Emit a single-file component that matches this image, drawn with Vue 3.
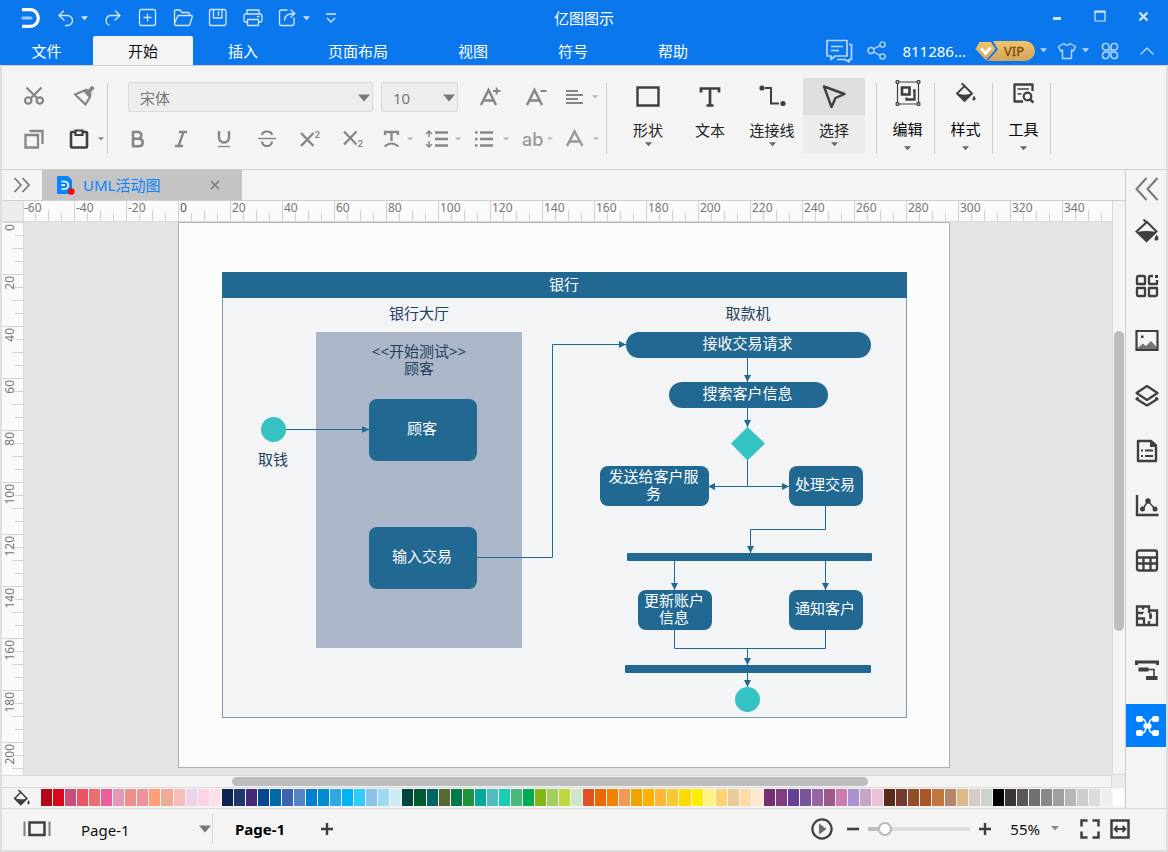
<script setup>
import { computed, h, onBeforeUnmount, onMounted, ref } from 'vue'

const S = (w, d, extra = '') => `<path d="${d}" fill="none" stroke="currentColor" stroke-width="${w}" ${extra}/>`
const F = (d, extra = '') => `<path d="${d}" fill="currentColor" ${extra}/>`
const T = (t, x, y, size, weight = 600) =>
  `<text x="${x}" y="${y}" font-size="${size}" font-weight="${weight}" font-family="Inter, sans-serif" fill="currentColor">${t}</text>`
const round = 'stroke-linecap="round" stroke-linejoin="round"'

const icons = {
  caret: [8, 5, F('M0 0H8L4 4.5Z')],
  caretBig: [12, 8, F('M0 0.5H12L6 7.5Z')],
  logo: [20, 22, S(3.2, 'M1 2.6H9.5A7.8 8.4 0 0 1 9.5 19.4H1') + '<path d="M2 11H10" stroke="#9cc8ff" stroke-width="3.2" stroke-linecap="round"/>'],
  undo: [20, 20, S(1.3, 'M7.5 3 3 7.5 8 12M3.5 7.5H11.5A5 5 0 0 1 11.5 17.5H9.5', round)],
  redo: [20, 20, S(1.3, 'M12.5 3 17 7.5 12 12M16.500 7.500H8.500A5 5 0 0 0 6 17', round)],
  newDoc: [20, 20, S(1.3, 'M3.5 1.5H15.5Q17.5 1.5 17.5 3.5V15.5Q17.5 17.5 15.5 17.5H3.5Q1.5 17.5 1.5 15.5V3.5Q1.5 1.5 3.5 1.5ZM6 9.5H13M9.5 6V13', round)],
  folder: [20, 20, S(1.3, 'M1.5 15V3Q1.5 2 2.5 2H7L9 4.5H15.5Q16.5 4.5 16.5 5.5V7.5M1.5 15.5 4.5 8.5Q4.8 7.5 6 7.5H18.5Q19.500 7.5 19.3 8.5L17 16Q16.7 17.5 15.5 17.5H3Q1.5 17.5 1.5 15.5', round)],
  save: [20, 20, S(1.3, 'M3 1.5H16Q18 1.5 18 3.5V15.5Q18 17.5 16 17.5H3Q1.5 17.5 1.5 15.5V3.5Q1.5 1.5 3 1.5ZM5.5 1.5V10H14V1.5M10.5 4V7.5', round)],
  print: [20, 20, S(1.3, 'M4 6V2H16V6M4 14H2.5Q1 14 1 12.5V8Q1 6 3 6H17Q19 6 19 8V12.5Q19 14 17.5 14H16M4.5 11.5H15.5V17.5H4.5ZM14.5 8.5H16', round)],
  export: [20, 20, S(1.3, 'M9 2H3.5Q1.5 2 1.5 4V15.5Q1.5 17.5 3.5 17.5H14Q16 17.5 16 15.5V10M6.5 12Q7 5.5 16 5.5M13 2 16.8 5.5 13 9', round)],
  more: [12, 12, S(1.4, 'M1 2H11M2 6 6 10 10 6')],
  min: [10, 10, F('M1 6H9V9H1Z')],
  max: [12, 12, S(1.2, 'M1 1.5H11V11H1Z') + F('M0.4 0.5H11.600V2.700H0.4Z')],
  close: [11, 11, S(2.2, 'M1.500 1.500 9.500 9.500M9.500 1.500 1.500 9.500')],
  chat: [28, 24, S(1.7, 'M2 1.5H22V17H10L6 20.500V17H2ZM6 7.500H18M6 11.500H14M24 5.500H26.500V20.500H24V23L20 20.500H12', 'stroke-linejoin="round"')],
  share: [20, 20, `<g fill="none" stroke="currentColor" stroke-width="1.4"><circle cx="4" cy="9.5" r="3"/><circle cx="15.5" cy="3.500" r="2.600"/><circle cx="15.5" cy="15.500" r="2.600"/><path d="M6.500 8 13 4.700M6.500 11 13 14.300"/></g>`],
  shirt: [20, 18, S(1.4, 'M7 1.500 1.500 4.500 3.500 9 5.500 8V16.500H14.500V8L16.500 9 18.500 4.500 13 1.500Q10 5 7 1.500Z', round)],
  clover: [18, 18, S(1.4, 'M8 8H4.500A3.300 3.300 0 1 1 8 4.500ZM10 8V4.500A3.300 3.300 0 1 1 13.500 8ZM8 10V13.500A3.300 3.300 0 1 1 4.500 10ZM10 10H13.500A3.300 3.300 0 1 1 10 13.500Z')],
  up: [16, 10, S(1.4, 'M1.500 8.500 8 2 14.500 8.500')],
  cut: [22, 22, `<g fill="none" stroke="currentColor" stroke-width="2.300"><circle cx="5.200" cy="14.500" r="3.200"/><circle cx="16.800" cy="14.500" r="3.200"/><path d="M3.500 1.500 14.500 12.500M18.500 1.500 7.500 12.500"/></g>`],
  brush: [24, 22, S(2.200, 'M3 8.500 12.500 4.500 18 11 13.500 18.500Z', 'stroke-linejoin="round"') + F('M10.500 4.500 14.500 2.500 16.500 3.500 19 0.300Q22 -0.500 22.500 2.500L19 6 19.500 9 18 12.500Z')],
  copy: [20, 20, S(2.300, 'M1.500 6H14V18.500H1.500ZM5.500 2H18.500V15')],
  paste: [22, 22, S(2.600, 'M7 4H4Q3 4 3 5V18.500Q3 19.500 4 19.500H18Q19 19.500 19 18.500V5Q19 4 18 4H15') + S(2.200, 'M7.500 2.500H14.500V7H7.500Z')],
  bold: [20, 20, S(2.600, 'M5 2.500V17.500M4 3H10.500A3.400 3.400 0 0 1 10.500 9.700H5M10.500 9.700H11.500A3.800 3.800 0 0 1 11.500 17.200H4')],
  italic: [20, 20, S(2.300, 'M8 3H16M4 17H12M12.500 3 7.500 17')],
  underline: [20, 20, S(2.500, 'M5 2V8.500A5 5 0 0 0 15 8.500V2') + S(1.300, 'M4 17.500H16')],
  strike: [20, 20, S(2.200, 'M15 6Q14.500 2.500 10 2.500T5 6M5 12.500Q5.500 17 10 17T15 12.500') + S(1.400, 'M1 9.500H19')],
  sup: [22, 20, S(2.300, 'M2 4 14.500 17M14.500 4 2 17') + T('2', 15.5, 9, 9, 600)],
  sub: [22, 20, S(2.300, 'M2 2.500 14.500 15.500M14.500 2.500 2 15.500') + T('2', 15.5, 18, 9, 600)],
  fontT: [20, 20, S(2.300, 'M3 6V3H16V6M9.500 3V12') + S(1.900, 'M2.500 17.500Q9.500 11.500 16.500 17.500')],
  spacing: [26, 20, S(2.300, 'M10 3.500H23M10 10H23M10 16.500H23') + S(1.500, 'M4 3V8M4 12V17M1 5 4 2 7 5M1 15 4 18 7 15')],
  list: [22, 20, S(2.300, 'M7 3.500H20M7 10H20M7 16.500H20M2 3.500H4.500M2 10H4.500M2 16.500H4.500')],
  ab: [24, 20, T('ab', 1, 17, 18, 500)],
  fontA: [20, 20, S(2.500, 'M2 17 9.500 2.500 17.500 17M4.500 12.500H14.500')],
  grow: [24, 22, S(2.500, 'M3 19 10.500 4 18 19M5.500 14.500H15.500') + S(2, 'M15 5H22.500M18.700 1.500V8.500')],
  shrink: [24, 22, S(2.500, 'M3 19 10.500 4 18 19M5.500 14.500H15.500') + S(2, 'M16.500 5H22.500')],
  align: [22, 20, S(2.200, 'M2 4H14M2 8H19M2 12H14M2 16H19')],
  rect: [24, 22, S(2.400, 'M1.500 1.500H22.500V19.500H1.500Z')],
  text: [24, 22, S(2.700, 'M3 6.500V2.500H21V6.500M12 2.500V19.500M8.500 19.500H15.500')],
  connector: [28, 24, `<circle cx="4" cy="3" r="2.600" fill="currentColor"/><circle cx="25" cy="18.500" r="2.600" fill="currentColor"/>` + S(2, 'M7 3H13V18.500H21')],
  pointer: [24, 24, S(2.400, 'M2 1.500 22.500 9 13.500 13 9.500 22Z', 'stroke-linejoin="round"')],
  edit: [26, 26, S(1.200, 'M2.500 2H23.500V24H2.500Z') + S(2.600, 'M7 7.500H14.500V14.500H7Z') + S(2.300, 'M18 10.500H19.500V19.500H11.500V17.500') + `<g fill="#f4f4f4" stroke="currentColor" stroke-width="1.300"><circle cx="2.500" cy="2" r="1.500"/><circle cx="23.500" cy="2" r="1.500"/><circle cx="2.500" cy="24" r="1.500"/><circle cx="23.500" cy="24" r="1.500"/></g>`],
  bucket: [22, 22, S(1.900, 'M6.500 1.500 10 4M9.500 4 17 11.500 9.500 19 2 11.500Z') + F('M2 11Q8 14 17 11.500L9.500 19.500Z') + F('M19 13.500Q22 18 19 18.500T19 13.500Z')],
  bucketBig: [24, 26, S(2, 'M8.500 1.500 12 5M12 4 21.500 13.500 11.500 23 1.500 13.500Z') + F('M2 14Q11 12 21.500 14L11.500 24Z') + F('M21.500 16.500Q25.500 22 21.500 22.500T21.500 16.500Z')],
  tools: [24, 22, S(2.300, 'M11 19.500H2.500V2.500H20.500V9', 'stroke-linejoin="round"') + S(1.900, 'M5.500 7H17M5.500 12H9.500', 'opacity=".75"') + `<circle cx="15.500" cy="14.500" r="3.800" fill="none" stroke="currentColor" stroke-width="2.200"/>` + S(2.400, 'M18 17.500 21.500 20.500')],
  expand: [18, 16, S(1.700, 'M1.500 1 8 8 1.500 15M9.500 1 16 8 9.500 15')],
  collapse: [24, 24, S(2, 'M11.500 1 1.500 12 11.500 23M22.500 1 12.500 12 22.500 23')],
  doc: [18, 19, '<path d="M1 1H10.500L14 4.500V17H1Z" fill="#0a84ff" stroke="#0a84ff" stroke-width="2" stroke-linejoin="round"/><path d="M4.500 5.500H7.500A3.500 3.500 0 0 1 7.500 13H4.500M4.500 9.200H8" fill="none" stroke="#fff" stroke-width="1.700"/><circle cx="14.300" cy="15.500" r="3.200" fill="#f00"/>'],
  tabClose: [10, 10, S(1.500, 'M1 1 9 9M9 1 1 9')],
  grid: [24, 24, S(2.300, 'M2 4Q2 2 3.500 2H8.500Q10 2 10 4V10H2ZM14 10V3.500Q14 2 15.500 2H18M22 6V10H13.500M2 14H10V22H3.500Q2 22 2 20.500ZM14 14H22V20.500Q22 22 20.500 22H14Z', 'stroke-linejoin="round"') + F('M20 1H23V4H20Z')],
  image: [24, 24, S(2.200, 'M1.500 2H22.500V21H1.500Z') + F('M2 19.500 8 14.500 11 17 16 12 22 18.500V21H2Z', 'opacity=".7"') + F('M6 6.500H8.500V9H6Z')],
  layers: [26, 24, S(2.200, 'M13 2 23.500 9 13 16 2.500 9ZM4.500 13.500 2.500 15 13 21.500 23.500 15 21.500 13.500', 'stroke-linejoin="round"')],
  notes: [24, 24, S(2.400, 'M3 2H16L21 6.500V22H3Z', 'stroke-linejoin="round"') + F('M15 2H17L21.500 6.500V8H15Z') + S(2.200, 'M6 11.500H8M10 11.500H18M6 17H8M10 17H18')],
  chart: [24, 24, S(2.400, 'M2 1V21H23.500') + S(1.500, 'M7.500 15.500 13 7 20 15') + `<g fill="currentColor"><circle cx="7.500" cy="15" r="2.500"/><circle cx="13" cy="7" r="2.700"/><circle cx="20" cy="15" r="2.500"/></g>`],
  table: [24, 24, S(2.300, 'M4 1.500H20Q22 1.500 22 3.500V19.500Q22 21.500 20 21.500H4Q2 21.500 2 19.500V3.500Q2 1.500 4 1.500ZM2 8.500H22M2 14.500H22M8.500 8.500V21.500M15.500 8.500V21.500')],
  plan: [24, 24, S(2.300, 'M2 2.500H14V6.500H22V21H2ZM2 9H8M8 2.500V5.500M2 14.500H9V21M8 9V8M14 6.500V9M14 21V17M14 12H17M15.500 9V15')],
  layout: [24, 24, S(3, 'M1.500 6V3H22.500V6') + F('M3.500 8.500H13.500V12.500H3.500ZM11 17H22.500V21H11Z') + S(1.600, 'M13 10.500H19V18')],
  mind: [26, 22, `<g fill="currentColor"><rect x="2" y="1" width="7" height="6" rx="2"/><rect x="18" y="1" width="7" height="6" rx="2"/><rect x="2" y="15" width="7" height="6" rx="2"/><rect x="18" y="15" width="7" height="6" rx="2"/><rect x="9.500" y="8.500" width="8" height="5" rx="1.500"/></g>` + S(1.600, 'M8 4Q12 4 12 11T8 18M19 4Q15 4 15 11T19 18')],
  pages: [28, 18, S(2.500, 'M6.500 2.500H21.500V15H6.500Z') + S(2, 'M1.500 1.500V16M26.500 1.500V16', 'opacity=".65"')],
  plus: [14, 14, S(2.400, 'M7 1V13M1 7H13')],
  minus: [14, 14, S(2.600, 'M1 7H13')],
  play: [22, 22, '<circle cx="11" cy="11" r="9.600" fill="none" stroke="currentColor" stroke-width="2.200"/>' + F('M8 5.500 15.500 11 8 16.500Z', 'opacity=".75"')],
  full: [20, 20, S(2.500, 'M1.500 7.500V1.500H7.500M12.500 1.500H18.500V7.500M18.500 12.500V18.500H12.500M7.500 18.500H1.500V12.500')],
  fit: [20, 20, S(2.500, 'M1.500 1.500H18.500V18.500H1.500Z') + S(1.800, 'M5 10H15M7.500 7 4.500 10 7.500 13M12.500 7 15.500 10 12.500 13')],
  vip: [60, 20, '<defs><linearGradient id="gold" x1="0" y1="0" x2="0" y2="1"><stop offset="0" stop-color="#f2c36c"/><stop offset="1" stop-color="#d3a35c"/></linearGradient></defs><path d="M18 0H50A10 10 0 0 1 50 20H12.500L23 8.500Z" fill="url(#gold)"/><path d="M4.500 1H16L20.500 8 11 19.500 0.500 8Z" fill="url(#gold)"/><path d="M6 7 10.500 12.500 15.500 6.500" fill="none" stroke="#fff" stroke-width="2.800"/><text x="29" y="15" font-size="13" font-family="Noto Sans, sans-serif" fill="#7b4d05" stroke="#7b4d05" stroke-width=".3">VIP</text>'],
}

const Icon = (props) => {
  const [w, hgt, body] = icons[props.name]
  return h('svg', { width: w, height: hgt, viewBox: `0 0 ${w} ${hgt}`, 'aria-hidden': 'true', innerHTML: body })
}
Icon.props = ['name']

const menus = ['文件', '开始', '插入', '页面布局', '视图', '符号', '帮助']
const quick = [
  { n: 'undo', l: '撤销', d: true }, { n: 'redo', l: '重做' }, { n: 'newDoc', l: '新建' }, { n: 'folder', l: '打开' },
  { n: 'save', l: '保存' }, { n: 'print', l: '打印' }, { n: 'export', l: '导出', d: true }, { n: 'more', l: '更多' },
]
const styles = [['bold', '加粗'], ['italic', '斜体'], ['underline', '下划线'], ['strike', '删除线'], ['sup', '上标'], ['sub', '下标']]
const drops = [['fontT', '文字方向'], ['spacing', '行距'], ['list', '列表'], ['ab', '大小写'], ['fontA', '字体颜色']]
const big = [
  { n: 'rect', t: '形状', d: true }, { n: 'text', t: '文本' },
  { n: 'connector', t: '连接线', d: true }, { n: 'pointer', t: '选择', d: true, on: true },
]
const groups = [['edit', '编辑'], ['bucket', '样式'], ['tools', '工具']]
const side = [
  ['bucketBig', '填充'], ['grid', '符号库'], ['image', '图片'], ['layers', '图层'], ['notes', '备注'],
  ['chart', '图表'], ['table', '表格'], ['plan', '平面图'], ['layout', '排列'], ['mind', '思维导图'],
]
const palette = ('b20818 d9081c c84f78 eb5560 ec6e72 e6609d e398b8 ef8f8a f0929c ff9f7a f0aa93 f6bdbc ead5e8 ffd3e6 ffdfe6 ' +
  '0f2350 20376e 432b78 054a91 0069a8 3f62ad 5584c4 0080cf 008dcd 2daae4 00b4f2 31caf9 8bc1eb 9fd9f0 cdeaf6 ' +
  '00433a 005a30 006563 576b30 007a48 1f943d 00ab9c 50bdc3 1accb2 48b97d 00ac52 80b915 a3cf62 bfd83f cde6c7 ' +
  'e35022 ec6800 f28300 f19a54 f1a400 ffb000 ffb735 f8c833 ffda00 ffee00 fdf283 fdd271 eacc98 ffdba8 fde8d0 ' +
  '74306f 803d81 664095 78549a 9766a0 9d5989 cd7baf ab91cf c8a4c8 ebc1da ' +
  '5a291a 743b30 904e29 a95525 c0763f b5866a dfb887 d5ccc6 cbd4cb ' +
  '000000 3c3535 585858 707070 888888 9ea09f b5b6b5 cccdcd dcdcdc efefef ffffff').split(' ')

const zoom = ref(11)

const step = 13
const tickLen = [20, 8, 11, 8]
const win = ref([window.innerWidth, window.innerHeight])
const measure = () => { win.value = [window.innerWidth, window.innerHeight] }
onMounted(() => window.addEventListener('resize', measure))
onBeforeUnmount(() => window.removeEventListener('resize', measure))
const count = (room) => Math.max(0, Math.floor(room / step))
const hTicks = computed(() => Array.from({ length: count(win.value[0] - 80) + 1 }, (_, i) => ({ x: i * step - 2, k: i % 4, v: i / 4 * 20 - 60 })))
const vTicks = computed(() => Array.from({ length: count(Math.max(win.value[1], 852) - 300) + 1 }, (_, i) => ({ y: i * step, k: i % 4, v: i / 4 * 20 })))

const boxes = [
  { x: 369, y: 399, w: 108, h: 62, r: 8, t: ['顾客'] },
  { x: 369, y: 527, w: 108, h: 62, r: 8, t: ['输入交易'] },
  { x: 626, y: 332, w: 245, h: 26, r: 13, t: ['接收交易请求'] },
  { x: 669, y: 382, w: 159, h: 26, r: 13, t: ['搜索客户信息'] },
  { x: 600, y: 466, w: 109, h: 40, r: 8, t: ['发送给客户服', '务'] },
  { x: 789, y: 466, w: 74, h: 40, r: 8, t: ['处理交易'] },
  { x: 638, y: 590, w: 74, h: 40, r: 8, t: ['更新账户', '信息'] },
  { x: 789, y: 590, w: 74, h: 40, r: 8, t: ['通知客户'] },
  { x: 627, y: 553, w: 245, h: 8, r: 1, t: [] },
  { x: 625, y: 665, w: 246, h: 8, r: 1, t: [] },
]
const labels = [
  { x: 419, y: 319, t: ['银行大厅'] }, { x: 748, y: 319, t: ['取款机'] },
  { x: 419, y: 357, t: ['<<开始测试>>', '顾客'] }, { x: 273, y: 465, t: ['取钱'] },
]
const lines = [
  'M286 429.5H369', 'M477 557.5H552.5V344.5H626', 'M747.5 358V382', 'M747.5 408V427', 'M747.5 486.5H789', 'M747.5 486.5H708',
  'M825.5 506V529.5H750.5V553', 'M674.5 561V590', 'M825.5 561V590', 'M747.5 648.5V665', 'M747.5 673V687',
]
</script>

<template>
  <div class="app">
    <header class="top">
      <div class="titlebar">
        <div class="quick">
          <Icon name="logo" class="logo" />
          <button v-for="q in quick" :key="q.n" type="button" :aria-label="q.l">
            <Icon :name="q.n" /><Icon v-if="q.d" name="caret" class="qcaret" />
          </button>
        </div>
        <h1>亿图图示</h1>
        <div class="winctl">
          <button type="button" aria-label="最小化"><Icon name="min" /></button>
          <button type="button" aria-label="最大化"><Icon name="max" /></button>
          <button type="button" aria-label="关闭"><Icon name="close" /></button>
        </div>
      </div>
      <div class="menubar">
        <nav>
          <button v-for="m in menus" :key="m" type="button" class="menu" :class="{ on: m === '开始' }">{{ m }}</button>
        </nav>
        <div class="account">
          <button type="button" aria-label="消息"><Icon name="chat" /></button>
          <button type="button" aria-label="分享"><Icon name="share" /></button>
          <span class="user">811286...</span>
          <button type="button" class="withcaret" aria-label="VIP"><Icon name="vip" /><Icon name="caret" class="small" /></button>
          <button type="button" class="withcaret" aria-label="主题"><Icon name="shirt" /><Icon name="caret" class="small" /></button>
          <button type="button" class="apps" aria-label="应用"><Icon name="clover" /></button>
          <button type="button" class="fold" aria-label="收起"><Icon name="up" /></button>
        </div>
      </div>
    </header>

    <section class="ribbon">
      <div class="clip">
        <button type="button" aria-label="剪切"><Icon name="cut" /></button>
        <button type="button" class="brush" aria-label="格式刷"><Icon name="brush" /></button>
        <button type="button" aria-label="复制"><Icon name="copy" /></button>
        <button type="button" class="drop dark" aria-label="粘贴"><Icon name="paste" /><Icon name="caret" class="tiny" /></button>
      </div>
      <i class="rule"></i>
      <div class="format">
        <div class="frow">
          <label class="sel font"><select aria-label="字体"><option>宋体</option></select><Icon name="caretBig" /></label>
          <label class="sel size"><select aria-label="字号"><option>10</option></select><Icon name="caretBig" /></label>
          <div class="scale">
            <button type="button" aria-label="增大字号"><Icon name="grow" /></button>
            <button type="button" aria-label="减小字号"><Icon name="shrink" /></button>
          </div>
          <button type="button" class="drop end" aria-label="对齐"><Icon name="align" /><Icon name="caret" class="tiny" /></button>
        </div>
        <div class="frow">
          <div class="basic">
            <button v-for="s in styles" :key="s[0]" type="button" :aria-label="s[1]"><Icon :name="s[0]" /></button>
          </div>
          <div class="drops">
            <button v-for="s in drops" :key="s[0]" type="button" class="drop" :aria-label="s[1]"><Icon :name="s[0]" /><Icon name="caret" class="tiny" /></button>
          </div>
        </div>
      </div>
      <i class="rule"></i>
      <div class="bigs">
        <button v-for="b in big" :key="b.n" type="button" class="big" :class="{ on: b.on }">
          <span class="pic"><Icon :name="b.n" /></span><span class="cap">{{ b.t }}</span><Icon v-if="b.d" name="caret" class="small" />
        </button>
      </div>
      <i class="rule"></i>
      <template v-for="g in groups" :key="g[0]">
        <button type="button" class="big grp">
          <span class="pic"><Icon :name="g[0]" /></span><span class="cap">{{ g[1] }}</span><Icon name="caret" class="small" />
        </button>
        <i class="rule"></i>
      </template>
    </section>

    <div class="main">
      <div class="left">
        <div class="tabs">
          <button type="button" class="expand" aria-label="展开"><Icon name="expand" /></button>
          <div class="tab">
            <Icon name="doc" /><span>UML活动图</span>
            <button type="button" aria-label="关闭标签"><Icon name="tabClose" /></button>
          </div>
        </div>
        <div class="work">
          <div class="corner"></div>
          <svg class="hruler" aria-hidden="true">
            <g v-for="t in hTicks" :key="t.x">
              <rect v-if="t.x > 0" :x="t.x" :y="20 - tickLen[t.k]" width="1" :height="tickLen[t.k]" />
              <text v-if="t.k === 0" :x="t.x + 2" y="11" :class="{ zero: t.v === 0 }">{{ t.v }}</text>
            </g>
          </svg>
          <div class="vtrack"><div class="vthumb"></div></div>
          <svg class="vruler" aria-hidden="true">
            <g v-for="t in vTicks" :key="t.y">
              <rect :x="21 - tickLen[t.k]" :y="t.y" :width="tickLen[t.k]" height="1" />
              <text v-if="t.k === 0" :transform="`translate(12 ${t.y + 2}) rotate(-90)`" text-anchor="end">{{ t.v }}</text>
            </g>
          </svg>
          <div class="canvas">
            <svg class="paper" width="770" height="544" viewBox="179 223 770 544" role="img" aria-label="UML活动图">
              <defs>
                <marker id="arrow" viewBox="0 0 6 6" refX="6" refY="3" markerWidth="7" markerHeight="7" orient="auto">
                  <path d="M0 0L6 3L0 6Z" fill="#216892" />
                </marker>
              </defs>
              <rect x="222.5" y="272.5" width="684" height="445" fill="#f3f4f6" stroke="#7d9ab1" />
              <rect x="222" y="272" width="685" height="26" fill="#216892" />
              <rect x="316" y="332" width="206" height="316" fill="#abb7c8" />
              <text class="light" x="564" y="290">银行</text>
              <g class="line">
                <path v-for="l in lines" :key="l" :d="l" marker-end="url(#arrow)" />
                <path d="M747.5 460V486.5M674.5 630V648.5H825.5V630" />
              </g>
              <circle cx="273.5" cy="429.5" r="12.5" fill="#35c2c3" />
              <circle cx="747.5" cy="699.5" r="12.5" fill="#35c2c3" />
              <path d="M747.5 427 765 443.5 747.5 460.5 731 443.5Z" fill="#35c2c3" />
              <g v-for="(b, i) in boxes" :key="i">
                <rect :x="b.x" :y="b.y" :width="b.w" :height="b.h" :rx="b.r" fill="#216892" />
                <text v-if="b.t.length" class="light" :y="b.y + b.h / 2 + 4 - (b.t.length - 1) * 8">
                  <tspan v-for="(t, j) in b.t" :key="t" :x="b.x + b.w / 2 - 1" :dy="j ? 17 : 0">{{ t }}</tspan>
                </text>
              </g>
              <text v-for="(l, i) in labels" :key="i" class="darkt" :y="l.y">
                <tspan v-for="(t, j) in l.t" :key="t" :x="l.x" :dy="j ? 17 : 0">{{ t }}</tspan>
              </text>
            </svg>
          </div>
          <div class="htrack"><div class="hthumb"></div></div>
          <div class="nook"></div>
        </div>
        <div class="palette">
          <button type="button" class="fillbtn" aria-label="填充颜色"><Icon name="bucket" /></button>
          <div class="swatches">
            <button v-for="c in palette" :key="c" type="button" :aria-label="'#' + c" :style="{ background: '#' + c }"></button>
          </div>
        </div>
      </div>
      <aside class="side">
        <button type="button" class="collapse" aria-label="收起面板"><Icon name="collapse" /></button>
        <div class="tools">
          <button v-for="s in side" :key="s[0]" type="button" :class="{ on: s[0] === 'mind' }" :aria-label="s[1]"><Icon :name="s[0]" /></button>
        </div>
      </aside>
    </div>

    <footer class="status">
      <button type="button" class="pagesbtn" aria-label="页面"><Icon name="pages" /></button>
      <label class="pagesel"><select aria-label="页面列表"><option>Page-1</option></select><Icon name="caretBig" /></label>
      <button type="button" class="pagetab">Page-1</button>
      <button type="button" aria-label="添加页面"><Icon name="plus" /></button>
      <div class="zoom">
        <button type="button" aria-label="播放"><Icon name="play" /></button>
        <div class="slide">
          <button type="button" aria-label="缩小"><Icon name="minus" /></button>
          <input v-model="zoom" type="range" min="0" max="100" aria-label="缩放">
          <button type="button" aria-label="放大"><Icon name="plus" /></button>
        </div>
        <button type="button" class="pct">55%<Icon name="caret" /></button>
        <div class="fits">
          <button type="button" aria-label="全屏"><Icon name="full" /></button>
          <button type="button" aria-label="适合宽度"><Icon name="fit" /></button>
        </div>
      </div>
    </footer>
  </div>
</template>

<style>
body { margin: 0; background: #dfdfdf; }
</style>

<style scoped>
* { box-sizing: border-box; }
.app {
  display: flex; flex-direction: column; min-height: 100vh;
  font: 15px/20px "Noto Sans", "Noto Sans CJK SC", sans-serif; color: #222;
  background: #dfdfdf; overflow: hidden;
}
svg { display: block; flex: none; }
button {
  display: flex; align-items: center; justify-content: center; padding: 0; border: 0;
  background: none; color: inherit; font: inherit; flex: none;
}
select { appearance: none; border: 0; background: none; font: inherit; color: inherit; width: 100%; height: 100%; padding: 0; }
.tiny { width: 6px; height: 4px; }
.small { width: 7px; height: 5px; }

.top { background: #0a78ec; color: #d3e6fc; }
.titlebar { display: grid; grid-template-columns: 1fr auto 1fr; align-items: center; height: 36px; }
.quick { display: flex; align-items: center; gap: 15px; padding-left: 21px; height: 36px; }
.logo { color: #fff; }
.qcaret { width: 7px; height: 5px; margin-left: 5px; }
h1 { margin: 0; font-size: 15px; font-weight: 400; color: #fff; }
.winctl { display: flex; justify-content: flex-end; gap: 32px; padding: 0 19px 4px 0; }
.menubar { display: flex; justify-content: space-between; height: 29px; }
nav { display: flex; }
.menu { padding: 0 35px; color: #fff; }
.menu:first-child { width: 93px; padding: 0; }
.menu.on { background: #f4f4f4; color: #111; border-radius: 2px 2px 0 0; }
.account { display: flex; align-items: center; padding-right: 13px; color: #b9d7fa; }
.account > button + button { margin-left: 14px; }
.user { color: #fff; margin: 0 9px 0 15px; }
.withcaret { gap: 5px; }
.account .withcaret + .withcaret { margin-left: 10px; }
.account .apps { margin-left: 12px; }
.account .fold { margin-left: 20px; }

.ribbon {
  display: flex; align-items: flex-start; height: 105px; margin: 0 2px; padding: 16px 0 0 18px;
  background: #f4f4f4; border-top: 1px solid #d3d3d3; border-bottom: 1px solid #cfcfcf; color: #868686;
}
.clip { display: grid; grid-template: 30px 30px / 28px 36px; gap: 12px 20px; }
.brush { width: 32px; }
.dark { color: #3f3f3f; }
.drop { justify-content: space-between; }
.drop .tiny { opacity: .6; }
.rule { width: 1px; height: 71px; background: #cbcbcb; margin: 1px 0 0; flex: none; }
.clip + .rule { margin-left: 3px; }
.format { display: grid; grid-template-rows: 30px 30px; gap: 12px; width: 470px; margin: 0 8px 0 20px; }
.frow { display: flex; justify-content: flex-start; }
.sel { position: relative; display: block; border: 1px solid #dadade; border-radius: 2px; background: #ededed; color: #777; }
.sel select { padding: 2px 0 0 11px; }
.sel svg { position: absolute; right: 2px; top: 11px; pointer-events: none; }
.font { width: 245px; margin-right: 8px; }
.size { width: 77px; margin-right: 20px; }
.scale { display: flex; gap: 22px; }
.end { width: 34px; margin-left: 16px; }
.basic { display: flex; gap: 23px; }
.basic button { width: 20px; }
.drops { display: flex; gap: 12px; margin-left: 19px; }
.drops button:nth-child(1) { width: 31px; }
.drops button:nth-child(2), .drops button:nth-child(3) { width: 36px; }
.drops button:nth-child(4) { width: 32px; }
.drops button:nth-child(5) { width: 34px; }
.drops button:nth-child(n + 4) { color: #999; }
.bigs { display: flex; margin: -4px 11px 0 10px; }
.big { flex-direction: column; justify-content: flex-start; width: 62px; height: 76px; color: #3f3f3f; border-radius: 2px; }
.big .pic { display: flex; align-items: center; justify-content: center; width: 100%; height: 37px; }
.big .cap { margin-top: 5px; color: #222; }
.big .small { margin-top: 2px; color: #666; }
.big.on { background: #ececec; }
.big.on .pic { background: #dedede; border-radius: 2px 2px 0 0; }
.big.grp { width: 57px; margin-top: -5px; padding-left: 4px; height: 82px; }
.big.grp .pic { height: 32px; }
.big.grp .cap { margin-top: 10px; color: #000; }
.big.grp .small { margin-top: 7px; }

.main { display: flex; flex: 1; margin: 0 2px; background: #f4f4f4; border-bottom: 1px solid #dcdcdc; }
.left { display: flex; flex-direction: column; flex: 1; min-width: 0; }
.tabs { display: flex; height: 31px; border-bottom: 1px solid #cfcfcf; }
.expand { width: 40px; color: #777; }
.tab { display: flex; align-items: center; width: 200px; padding: 0 22px 0 15px; gap: 8px; background: #c4c4c4; color: #0a84ff; }
.tab button { margin-left: auto; color: #777; }
.work { display: grid; grid-template: 21px minmax(553px, 1fr) 13px / 22px minmax(0, 1fr) 13px; flex: 1; background: #f4f4f4; }
.corner { background: #ececec; border-right: 1px solid #dadada; border-bottom: 1px solid #dadada; }
.hruler, .vruler { background: #fafafa; fill: #d2d2d2; overflow: visible; font-size: 12px; }
.hruler { width: 100%; height: 21px; border-bottom: 1px solid #dadada; }
.vruler { width: 22px; height: 100%; border-right: 1px solid #dadada; }
.hruler text, .vruler text { fill: #777; }
.hruler .zero { fill: #555; }
.vtrack { grid-row: 1 / 3; grid-column: 3; background: #f4f4f4; border-left: 1px solid #dadada; border-bottom: 1px solid #dadada; padding: 130px 1px 0; }
.vthumb { height: 300px; border-radius: 5px; background: #bdbdbd; }
.canvas { background: #e4e4e4; padding-left: 154px; overflow: hidden; }
.paper { box-sizing: content-box; border: 1px solid #b0b0b0; background: #fcfcfc; }
.htrack { grid-column: 1 / 3; border: solid #dadada; border-width: 1px 1px 1px 0; padding: 1px 243px 0 230px; }
.hthumb { height: 9px; border-radius: 5px; background: #bdbdbd; }
.nook { background: #ececec; }
.paper text { font-size: 15px; text-anchor: middle; }
.light { fill: #fff; }
.darkt { fill: #24405c; }
.line { fill: none; stroke: #216892; stroke-width: 1; }
.palette { display: flex; height: 20px; align-items: flex-start; padding-top: 1px; }
.fillbtn { width: 39px; height: 18px; color: #3f3f3f; }
.fillbtn svg { width: 18px; height: 18px; }
.swatches { display: flex; gap: 1px; flex: 1; height: 17px; padding-right: 1px; }
.swatches button { flex: 1 1 0; height: 17px; min-width: 0; }
.side { width: 41px; border-left: 1px solid #cbcbcb; color: #3f3f3f; }
.side button { width: 100%; padding-left: 2px; }
.side .collapse { height: 38px; color: #777; }
.tools { display: grid; gap: 12px; padding-top: 1px; }
.tools button { height: 43px; }
.tools .on { background: #0080ff; color: #fff; }

.status { display: flex; align-items: center; height: 41px; margin: 0 2px 2px; padding: 0 36px 2px 21px; background: #f4f4f4; color: #3f3f3f; }
.pagesel { position: relative; width: 162px; height: 30px; border-right: 1px solid #d8d8d8; color: #111; }
.pagesel select { padding: 2px 0 0 30px; }
.pagesel svg { position: absolute; right: 1px; top: 11px; color: #777; pointer-events: none; }
.pagetab { margin: 0 35px 0 22px; font-weight: 700; color: #000; }
.zoom { display: flex; align-items: center; margin-left: auto; }
.slide { display: flex; align-items: center; gap: 8px; margin: 0 18px 0 13px; }
.pct { gap: 11px; color: #111; }
.pct svg { color: #888; }
.fits { display: flex; gap: 10px; margin-left: 21px; }
input[type="range"] {
  appearance: none; width: 102px; height: 14px; margin: 0; border-radius: 2px;
  background: linear-gradient(90deg, #bdbdbd 12%, #dedede 12%) center / 100% 4px no-repeat;
}
input[type="range"]::-webkit-slider-thumb {
  appearance: none; width: 14px; height: 14px; border-radius: 7px; border: 2px solid #b8b8b8; background: #fff;
}
</style>
